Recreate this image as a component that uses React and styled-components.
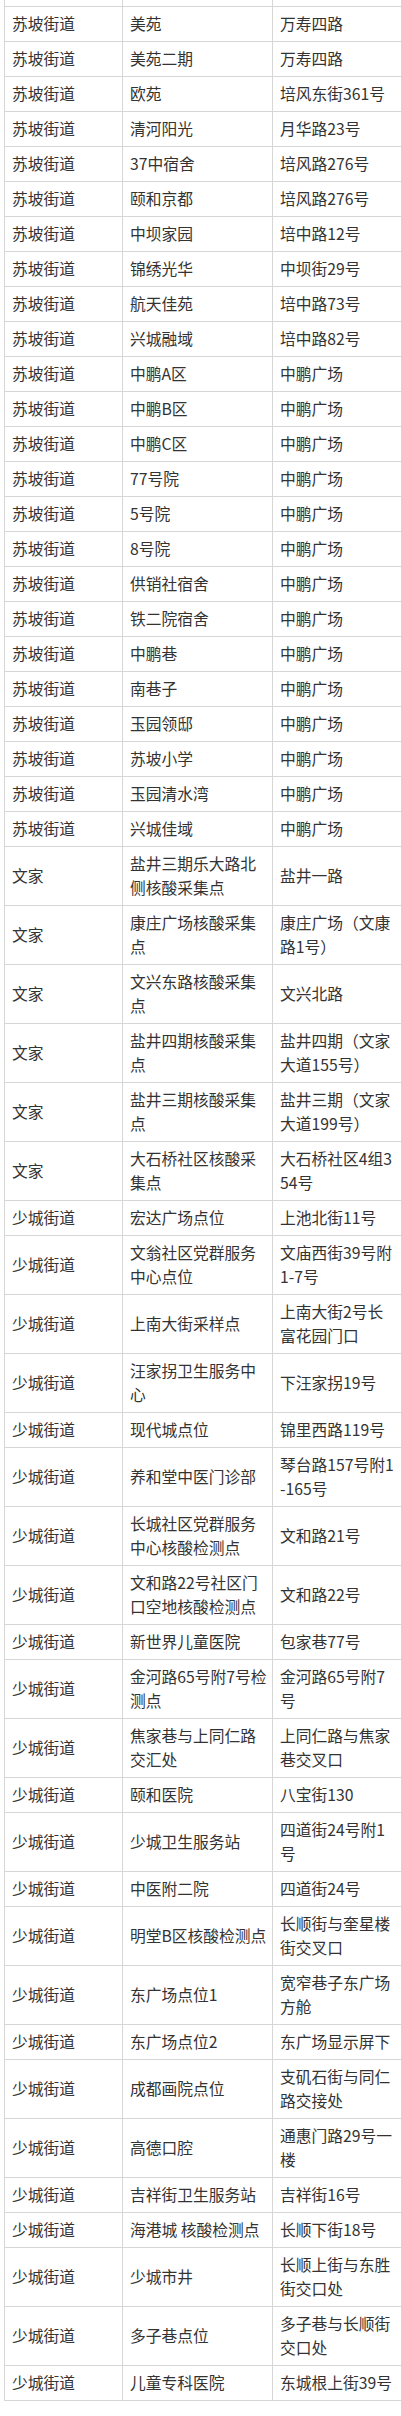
import React from "react";
import styled, { createGlobalStyle } from "styled-components";

// 核酸采样点位表
const GlobalStyle = createGlobalStyle`
  html, body {
    margin: 0;
    padding: 0;
    background: #fff;
    overflow-x: hidden;
  }
  body {
    font-family: "Noto Sans CJK SC", "Noto Sans", sans-serif;
    color: #333;
  }
`;

const Table = styled.table`
  margin-left: 4px;
  width: 397px;
  table-layout: fixed;
  border-collapse: collapse;
  font-size: 15.75px;
  line-height: 24px;
`;

const Cell = styled.td`
  border: 1px solid #d6d6d6;
  padding: 5px 4px 5px 7px;
  vertical-align: middle;
  white-space: nowrap;
  overflow: hidden;
  text-align: left;
`;

const TopCell = styled.td`
  border-left: 1px solid #d6d6d6;
  border-right: 1px solid #d6d6d6;
  border-bottom: 1px solid #d6d6d6;
  border-top: none;
  height: 6px;
  padding: 0;
`;

const BottomGap = styled.div`
  height: 14px;
`;

const rows = [
  ["苏坡街道", "美苑", "万寿四路"],
  ["苏坡街道", "美苑二期", "万寿四路"],
  ["苏坡街道", "欧苑", "培风东街361号"],
  ["苏坡街道", "清河阳光", "月华路23号"],
  ["苏坡街道", "37中宿舍", "培风路276号"],
  ["苏坡街道", "颐和京都", "培风路276号"],
  ["苏坡街道", "中坝家园", "培中路12号"],
  ["苏坡街道", "锦绣光华", "中坝街29号"],
  ["苏坡街道", "航天佳苑", "培中路73号"],
  ["苏坡街道", "兴城融域", "培中路82号"],
  ["苏坡街道", "中鹏A区", "中鹏广场"],
  ["苏坡街道", "中鹏B区", "中鹏广场"],
  ["苏坡街道", "中鹏C区", "中鹏广场"],
  ["苏坡街道", "77号院", "中鹏广场"],
  ["苏坡街道", "5号院", "中鹏广场"],
  ["苏坡街道", "8号院", "中鹏广场"],
  ["苏坡街道", "供销社宿舍", "中鹏广场"],
  ["苏坡街道", "铁二院宿舍", "中鹏广场"],
  ["苏坡街道", "中鹏巷", "中鹏广场"],
  ["苏坡街道", "南巷子", "中鹏广场"],
  ["苏坡街道", "玉园领邸", "中鹏广场"],
  ["苏坡街道", "苏坡小学", "中鹏广场"],
  ["苏坡街道", "玉园清水湾", "中鹏广场"],
  ["苏坡街道", "兴城佳域", "中鹏广场"],
  ["文家", "盐井三期乐大路北|侧核酸采集点", "盐井一路"],
  ["文家", "康庄广场核酸采集|点", "康庄广场（文康|路1号）"],
  ["文家", "文兴东路核酸采集|点", "文兴北路"],
  ["文家", "盐井四期核酸采集|点", "盐井四期（文家|大道155号）"],
  ["文家", "盐井三期核酸采集|点", "盐井三期（文家|大道199号）"],
  ["文家", "大石桥社区核酸采|集点", "大石桥社区4组3|54号"],
  ["少城街道", "宏达广场点位", "上池北街11号"],
  ["少城街道", "文翁社区党群服务|中心点位", "文庙西街39号附|1-7号"],
  ["少城街道", "上南大街采样点", "上南大街2号长|富花园门口"],
  ["少城街道", "汪家拐卫生服务中|心", "下汪家拐19号"],
  ["少城街道", "现代城点位", "锦里西路119号"],
  ["少城街道", "养和堂中医门诊部", "琴台路157号附1|-165号"],
  ["少城街道", "长城社区党群服务|中心核酸检测点", "文和路21号"],
  ["少城街道", "文和路22号社区门|口空地核酸检测点", "文和路22号"],
  ["少城街道", "新世界儿童医院", "包家巷77号"],
  ["少城街道", "金河路65号附7号检|测点", "金河路65号附7|号"],
  ["少城街道", "焦家巷与上同仁路|交汇处", "上同仁路与焦家|巷交叉口"],
  ["少城街道", "颐和医院", "八宝街130"],
  ["少城街道", "少城卫生服务站", "四道街24号附1|号"],
  ["少城街道", "中医附二院", "四道街24号"],
  ["少城街道", "明堂B区核酸检测点", "长顺街与奎星楼|街交叉口"],
  ["少城街道", "东广场点位1", "宽窄巷子东广场|方舱"],
  ["少城街道", "东广场点位2", "东广场显示屏下"],
  ["少城街道", "成都画院点位", "支矶石街与同仁|路交接处"],
  ["少城街道", "高德口腔", "通惠门路29号一|楼"],
  ["少城街道", "吉祥街卫生服务站", "吉祥街16号"],
  ["少城街道", "海港城 核酸检测点", "长顺下街18号"],
  ["少城街道", "少城市井", "长顺上街与东胜|街交口处"],
  ["少城街道", "多子巷点位", "多子巷与长顺街|交口处"],
  ["少城街道", "儿童专科医院", "东城根上街39号"],
];

const Lines = ({ text }) =>
  text.split("|").map((line, i) => (
    <React.Fragment key={i}>
      {i > 0 && <br />}
      {line}
    </React.Fragment>
  ));

const App = () => (
  <>
    <GlobalStyle />
    <Table>
      <colgroup>
        <col style={{ width: 118 }} />
        <col style={{ width: 150 }} />
        <col style={{ width: 129 }} />
      </colgroup>
      <tbody>
        <tr>
          <TopCell />
          <TopCell />
          <TopCell />
        </tr>
        {rows.map((row, i) => (
          <tr key={i}>
            {row.map((text, j) => (
              <Cell key={j}>
                <Lines text={text} />
              </Cell>
            ))}
          </tr>
        ))}
      </tbody>
    </Table>
    <BottomGap />
  </>
);

export default App;
